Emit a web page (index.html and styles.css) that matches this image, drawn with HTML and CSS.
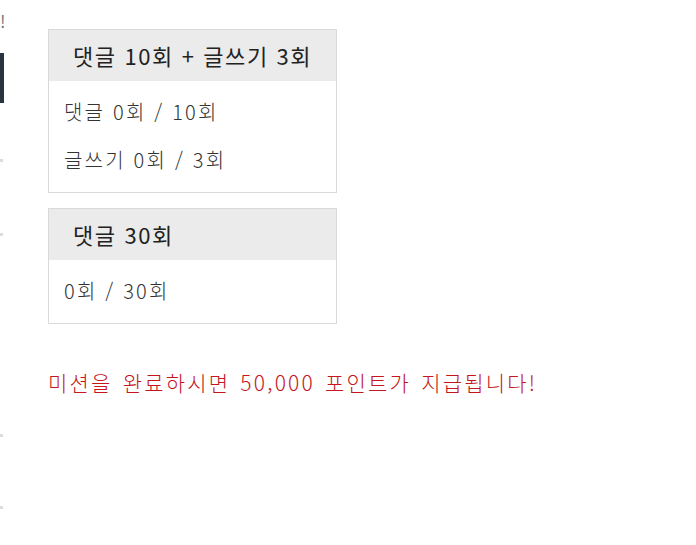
FILE: index.html
```html
<!DOCTYPE html>
<html lang="ko">
<head>
    <meta charset="UTF-8">
    <meta name="viewport" content="width=device-width, initial-scale=1.0">
    <title>미션</title>
    <link rel="stylesheet" href="styles.css">
</head>
<body>
    <div class="page">
        <div class="side">
            <span class="side-mark">!</span>
            <span class="side-btn"></span>
            <span class="side-dot dot1"></span>
            <span class="side-dot dot2"></span>
            <span class="side-dot dot3"></span>
            <span class="side-dot dot4"></span>
        </div>
        <div class="main">
            <div class="mission">
                <div class="mission-title">댓글 10회 + 글쓰기 3회</div>
                <div class="mission-body">
                    <p>댓글 0회 / 10회</p>
                    <p>글쓰기 0회 / 3회</p>
                </div>
            </div>
            <div class="mission">
                <div class="mission-title">댓글 30회</div>
                <div class="mission-body">
                    <p>0회 / 30회</p>
                </div>
            </div>
            <p class="notice">미션을 완료하시면 50,000 포인트가 지급됩니다!</p>
        </div>
    </div>
</body>
</html>
```

FILE: styles.css
```css
*{margin:0;padding:0;box-sizing:border-box;}
body{background:#fff;font-family:"Noto Sans CJK KR","Noto Sans",sans-serif;color:#333;}
.page{display:flex;}
.side{width:5px;height:545px;overflow:hidden;display:flex;flex-direction:column;}
.side-mark{height:53px;font-size:17px;line-height:42px;color:#777;}
.side-btn{display:block;width:4px;height:50px;background:#2a3440;}
.side-dot{display:block;width:3px;height:3px;background:#ddd;}
.dot1{margin-top:56px;}
.dot2{margin-top:71px;}
.dot3{margin-top:198px;}
.dot4{margin-top:69px;}
.main{padding:29px 0 0 43px;}
.mission{width:289px;border:1px solid #d9d9d9;margin-bottom:15px;}
.mission-title{background:#ebebeb;height:51px;line-height:51px;padding-left:24px;font-size:22px;font-weight:400;letter-spacing:1.6px;color:#222;}
.mission-body{padding:7px 15px 8px;}
.mission-body p{font-size:20px;font-weight:300;line-height:48px;letter-spacing:2.2px;color:#333;}
.notice{margin-top:43px;font-size:21px;font-weight:300;color:#c4161c;letter-spacing:2.2px;word-spacing:2px;}
```
